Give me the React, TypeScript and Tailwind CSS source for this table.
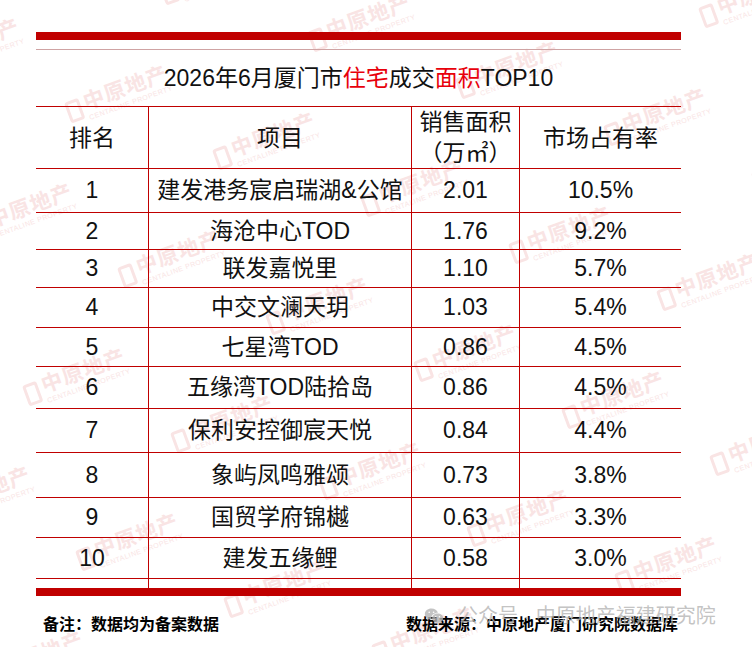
import { RiWechatFill } from "react-icons/ri";

interface RankRow {
  rank: string;
  name: string;
  area: string;
  share: string;
  h: string;
}

const rows: RankRow[] = [
  { rank: "1", name: "建发港务宸启瑞湖&公馆", area: "2.01", share: "10.5%", h: "h-[44px]" },
  { rank: "2", name: "海沧中心TOD", area: "1.76", share: "9.2%", h: "h-[37px]" },
  { rank: "3", name: "联发嘉悦里", area: "1.10", share: "5.7%", h: "h-[38px]" },
  { rank: "4", name: "中交文澜天玥", area: "1.03", share: "5.4%", h: "h-[40px]" },
  { rank: "5", name: "七星湾TOD", area: "0.86", share: "4.5%", h: "h-[39px]" },
  { rank: "6", name: "五缘湾TOD陆拾岛", area: "0.86", share: "4.5%", h: "h-[42px]" },
  { rank: "7", name: "保利安控御宸天悦", area: "0.84", share: "4.4%", h: "h-[44px]" },
  { rank: "8", name: "象屿凤鸣雅颂", area: "0.73", share: "3.8%", h: "h-[45px]" },
  { rank: "9", name: "国贸学府锦樾", area: "0.63", share: "3.3%", h: "h-[40px]" },
  { rank: "10", name: "建发五缘鲤", area: "0.58", share: "3.0%", h: "h-[41px]" },
];

// tiled brand watermark, lattice picked from the picture
const marks: { x: number; y: number }[] = [];
for (let i = -2; i <= 7; i++) {
  for (let j = -2; j <= 5; j++) {
    const x = 118 + 148 * i - 95 * j;
    const y = 95 + 47 * i + 118 * j;
    if (x > -80 && x < 830 && y > -40 && y < 690) marks.push({ x, y });
  }
}

function BrandMark({ x, y }: { x: number; y: number }) {
  return (
    <div
      className="absolute -translate-x-1/2 -translate-y-1/2 -rotate-[20deg] flex items-center gap-1 whitespace-nowrap text-[#f9e4e4]"
      style={{ left: x, top: y }}
    >
      <div className="w-[15px] h-[22px] rounded-[3px] border-[3px] border-[#f9e4e4]" />
      <div className="flex flex-col leading-none">
        <span className="text-[21px] font-bold tracking-[1px]">中原地产</span>
        <span className="text-[7px] tracking-[0.5px] mt-[2px]">CENTALINE PROPERTY</span>
      </div>
    </div>
  );
}

const line = "border-[#c00000]";

export default function App() {
  return (
    <div className="relative w-[752px] h-[647px] overflow-hidden bg-white text-[#111] font-['Liberation_Sans','Noto_Sans_CJK_SC',sans-serif]">
      <div className="absolute inset-0 z-0 pointer-events-none">
        {marks.map((m, i) => (
          <BrandMark key={i} x={m.x} y={m.y} />
        ))}
      </div>

      <div className="relative z-10 pt-[32px] pl-[36px] w-[681px]">
        <div className="h-[8px] bg-[#c00000]" />
        <div className="mt-[9px] h-px bg-[#cfa3a3]" />

        <div className="h-[56px] flex items-center justify-center text-[23px]">
          <span>
            2026年6月厦门市<span className="text-[#e8000b]">住宅</span>成交
            <span className="text-[#e8000b]">面积</span>TOP10
          </span>
        </div>

        <div className={`grid grid-cols-[112px_263px_108px_162px] h-[62px] border-t ${line} text-[23px]`}>
          <div className="flex items-center justify-center">排名</div>
          <div className={`flex items-center justify-center border-l ${line}`}>项目</div>
          <div className={`flex flex-col items-center justify-center border-l ${line} leading-[31px]`}>
            <span>销售面积</span>
            <span>（万㎡）</span>
          </div>
          <div className={`flex items-center justify-center border-l ${line}`}>市场占有率</div>
        </div>

        {rows.map((r) => (
          <div
            key={r.rank}
            className={`grid grid-cols-[112px_263px_108px_162px] ${r.h} border-t ${line} text-[23px]`}
          >
            <div className="flex items-center justify-center">{r.rank}</div>
            <div className={`flex items-center justify-center border-l ${line}`}>{r.name}</div>
            <div className={`flex items-center justify-center border-l ${line}`}>{r.area}</div>
            <div className={`flex items-center justify-center border-l ${line}`}>{r.share}</div>
          </div>
        ))}

        <div className={`grid grid-cols-[112px_263px_108px_162px] h-[10px] border-t ${line}`}>
          <div />
          <div className={`border-l ${line}`} />
          <div className={`border-l ${line}`} />
          <div className={`border-l ${line}`} />
        </div>
        <div className="h-[8px] bg-[#c00000]" />

        <div className="mt-[17px] h-[24px] flex justify-between pl-[7px] pr-[3px] text-[16px] leading-[24px] font-bold text-black">
          <span>备注：数据均为备案数据</span>
          <span>数据来源：中原地产厦门研究院数据库</span>
        </div>
      </div>

      <div className="absolute z-20 left-[424px] top-[603px] flex items-center gap-[14px] whitespace-nowrap text-[20px] leading-[26px] text-[#b4b4b4]/80 pointer-events-none">
        <RiWechatFill className="w-[20px] h-[20px]" />
        <span>公众号 · 中原地产福建研究院</span>
      </div>
    </div>
  );
}
